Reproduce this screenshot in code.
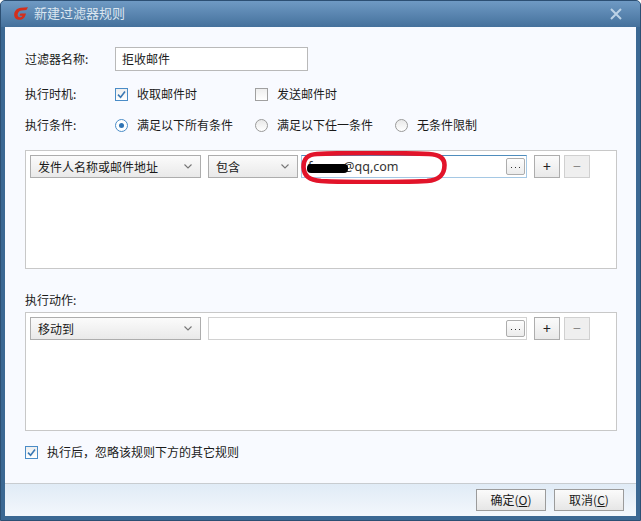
<div class="win">
  <header class="title">
    <svg class="logo" viewBox="0 0 14 13" width="14" height="13" aria-hidden="true">
      <path d="M14 .2 L7 .8 C3 1.2 .6 3.8 .2 7 C-.2 10.4 2 12.8 5.4 12.8 C8.8 12.8 11 10.8 12 6.4 L6.4 6.4 L5.4 8.8 L8.4 8.8 C7.9 9.9 7 10.3 6 10.3 C4.2 10.3 3.4 8.9 3.7 7.1 C4.1 4.9 5.6 3.6 7.8 3.4 L12.4 3 Z" fill="#d42f1c"/>
    </svg>
    <span class="title-text">新建过滤器规则</span>
    <svg class="close" viewBox="0 0 12 12" width="12" height="12" aria-hidden="true">
      <path d="M1 1 L11 11 M11 1 L1 11" stroke="#bcd2e6" stroke-width="2" fill="none"/>
    </svg>
  </header>

  <main class="body">
    <div class="row name-row">
      <span class="lab">过滤器名称:</span>
      <div class="name-input">拒收邮件</div>
    </div>
    <div class="row time-row">
      <span class="lab">执行时机:</span>
      <span class="opt"><span class="cb on"><svg viewBox="0 0 13 13" width="13" height="13"><path d="M3 6.6 L5.6 9.3 L10 3.6" stroke="#3a78b4" stroke-width="1.6" fill="none"/></svg></span>收取邮件时</span>
      <span class="opt"><span class="cb"></span>发送邮件时</span>
    </div>
    <div class="row cond-row">
      <span class="lab">执行条件:</span>
      <span class="opt"><span class="rd on"></span>满足以下所有条件</span>
      <span class="opt"><span class="rd"></span>满足以下任一条件</span>
      <span class="opt"><span class="rd"></span>无条件限制</span>
    </div>

    <section class="panel first">
      <div class="rule">
        <div class="sel wide">发件人名称或邮件地址<svg class="chev" viewBox="0 0 8 5" width="8" height="5"><path d="M.5 .5 L4 4 L7.5 .5" stroke="#777" stroke-width="1.1" fill="none"/></svg></div>
        <div class="sel mid">包含<svg class="chev" viewBox="0 0 8 5" width="8" height="5"><path d="M.5 .5 L4 4 L7.5 .5" stroke="#777" stroke-width="1.1" fill="none"/></svg></div>
        <div class="val focus">
          <span class="val-text">f<span class="gap"></span>@qq,com</span>
          <span class="dots"><svg viewBox="0 0 17 15" width="17" height="15"><path d="M4 8.5h1M8 8.5h1M12 8.5h1" stroke="#333" stroke-width="1.2" fill="none"/></svg></span>
          <span class="blob"></span>
          <svg class="ring" viewBox="0 0 146 33" width="146" height="33" aria-hidden="true"><path d="M16 3 C50 1.5 100 2 128 3 C138 3.5 143.5 7 143.5 14 C143.5 24 138 29 126 30 C96 31.5 46 31.5 20 30 C8 29 3 25 2.5 16 C2.5 7 7 3.5 16 3 Z" fill="none" stroke="#e2142a" stroke-width="4.6"/></svg>
        </div>
        <div class="pm">+</div>
        <div class="pm off">−</div>
      </div>
    </section>

    <div class="act-label">执行动作:</div>

    <section class="panel">
      <div class="rule">
        <div class="sel wide">移动到<svg class="chev" viewBox="0 0 8 5" width="8" height="5"><path d="M.5 .5 L4 4 L7.5 .5" stroke="#777" stroke-width="1.1" fill="none"/></svg></div>
        <div class="val plain"><span class="val-text"></span><span class="dots"><svg viewBox="0 0 17 15" width="17" height="15"><path d="M4 8.5h1M8 8.5h1M12 8.5h1" stroke="#333" stroke-width="1.2" fill="none"/></svg></span></div>
        <div class="pm">+</div>
        <div class="pm off">−</div>
      </div>
    </section>

    <div class="after"><span class="cb on"><svg viewBox="0 0 13 13" width="13" height="13"><path d="M3 6.6 L5.6 9.3 L10 3.6" stroke="#3a78b4" stroke-width="1.6" fill="none"/></svg></span>执行后，忽略该规则下方的其它规则</div>
  </main>

  <footer class="foot">
    <div class="btn">确定(<u>O</u>)</div>
    <div class="btn">取消(<u>C</u>)</div>
  </footer>
</div>

<style>
  :global(body) { margin: 0; background: #fff; }
  .win {
    width: 641px; height: 521px; box-sizing: border-box;
    display: flex; flex-direction: column;
    background: #3b6893;
    border: 1px solid #2c4f73;
    border-radius: 5px 5px 0 0;
    padding: 0 4px 4px;
    font: 12px/16px "Noto Sans CJK SC", "Liberation Sans", sans-serif;
    color: #1a1a1a;
    overflow: hidden;
  }
  .title {
    height: 26px; flex: none; margin: 0 -4px; padding: 0 15px 0 13px;
    display: flex; align-items: center;
    background: linear-gradient(#6f9ac4, #45719c);
  }
  .logo { margin-right: 6px; margin-top: -1px; }
  .title-text { color: #dbe6f0; font-size: 13px; flex: 1; margin-top: -3px; }
  .close { margin-top: -1px; margin-right: 3px; }
  .body {
    flex: 1; background: #f8faff; box-sizing: border-box;
    padding: 20px 19px 0 20px;
    display: flex; flex-direction: column;
  }
  .row { display: flex; align-items: center; }
  .lab { width: 90px; flex: none; }
  .name-row { height: 24px; }
  .name-input {
    width: 193px; height: 24px; box-sizing: border-box;
    border: 1px solid #b9b9b9; background: #fff; padding: 3px 6px;
  }
  .time-row { height: 16px; margin-top: 15px; }
  .cond-row { height: 16px; margin-top: 15px; }
  .opt { width: 140px; flex: none; display: flex; align-items: center; }
  .cb {
    width: 13px; height: 13px; box-sizing: border-box; flex: none; margin-right: 9px;
    border: 1px solid #a0a0a0; background: linear-gradient(#eee, #fff);
    display: flex; align-items: center; justify-content: center;
  }
  .cb.on { border-color: #4a8cc7; }
  .cb svg { flex: none; }
  .rd {
    width: 13px; height: 13px; box-sizing: border-box; border-radius: 50%; flex: none; margin-right: 9px;
    border: 1px solid #9a9a9a; background: linear-gradient(#e8e8e8, #fff);
    display: flex; align-items: center; justify-content: center;
  }
  .rd.on { border-color: #4a8cc7; background: #fff; }
  .rd.on::after { content: ""; width: 5px; height: 5px; border-radius: 50%; background: #2f74b5; }
  .panel {
    width: 592px; height: 119px; box-sizing: border-box; flex: none;
    border: 1px solid #c8c8c8; background: #fff; padding: 4px;
  }
  .panel.first { margin-top: 17px; }
  .act-label { height: 16px; margin-top: 23px; margin-bottom: 4px; }
  .rule { display: flex; align-items: center; height: 23px; }
  .sel {
    height: 23px; box-sizing: border-box; flex: none;
    border: 1px solid #adadad;
    background: linear-gradient(#fbfbfb, #e9e9e9);
    display: flex; align-items: center; justify-content: space-between;
    padding: 0 8px 0 7px;
  }
  .wide { width: 171px; margin-right: 7px; }
  .mid { width: 90px; margin-right: 3px; }
  .val {
    position: relative; height: 23px; box-sizing: border-box; flex: none;
    border: 1px solid #abadb3; background: #fff;
    display: flex; align-items: center; justify-content: space-between;
    padding: 0 1px 0 6px; margin-right: 7px;
  }
  .val.focus { width: 226px; border-color: #a5c8e4; border-top-color: #4f8dbd; }
  .val.plain { width: 319px; border-color: #d2d2d2; }
  .val-text { font-family: "Noto Sans", "Liberation Sans", sans-serif; font-size: 12.5px; color: #333; display: flex; align-items: center; }
  .gap { width: 31px; }
  .dots {
    width: 19px; height: 17px; box-sizing: border-box; border: 1px solid #adadad; border-radius: 2px;
    background: linear-gradient(#fdfdfd, #ececec);
    display: flex; align-items: center; justify-content: center; overflow: hidden;
  }
  .dots svg { flex: none; }
  .blob {
    position: absolute; left: 5px; top: 8px; width: 41px; height: 9px;
    background: #000; border-radius: 4px;
  }
  .ring { position: absolute; left: -1px; top: -5px; }
  .pm {
    width: 26px; height: 23px; box-sizing: border-box; flex: none; margin-right: 4px;
    border: 1px solid #adadad; background: linear-gradient(#fbfbfb, #e9e9e9);
    text-align: center; line-height: 20px; font-size: 14px; color: #222;
  }
  .pm.off { border-color: #d0d0d0; background: #efefef; color: #888; }
  .after { display: flex; align-items: center; margin-top: 13px; height: 16px; }
  .foot {
    height: 33px; flex: none; box-sizing: border-box;
    border-top: 1px solid #c8ccd0;
    background: linear-gradient(#e0ebf6, #f3f7fc);
    display: flex; justify-content: flex-end; align-items: center; gap: 8px;
    padding: 0 12px 1px 0;
  }
  .btn {
    width: 70px; height: 22px; box-sizing: border-box;
    border: 1px solid #9b9b9b; background: linear-gradient(#fbfbfb, #e6e6e6);
    text-align: center; line-height: 20px;
  }
</style>
